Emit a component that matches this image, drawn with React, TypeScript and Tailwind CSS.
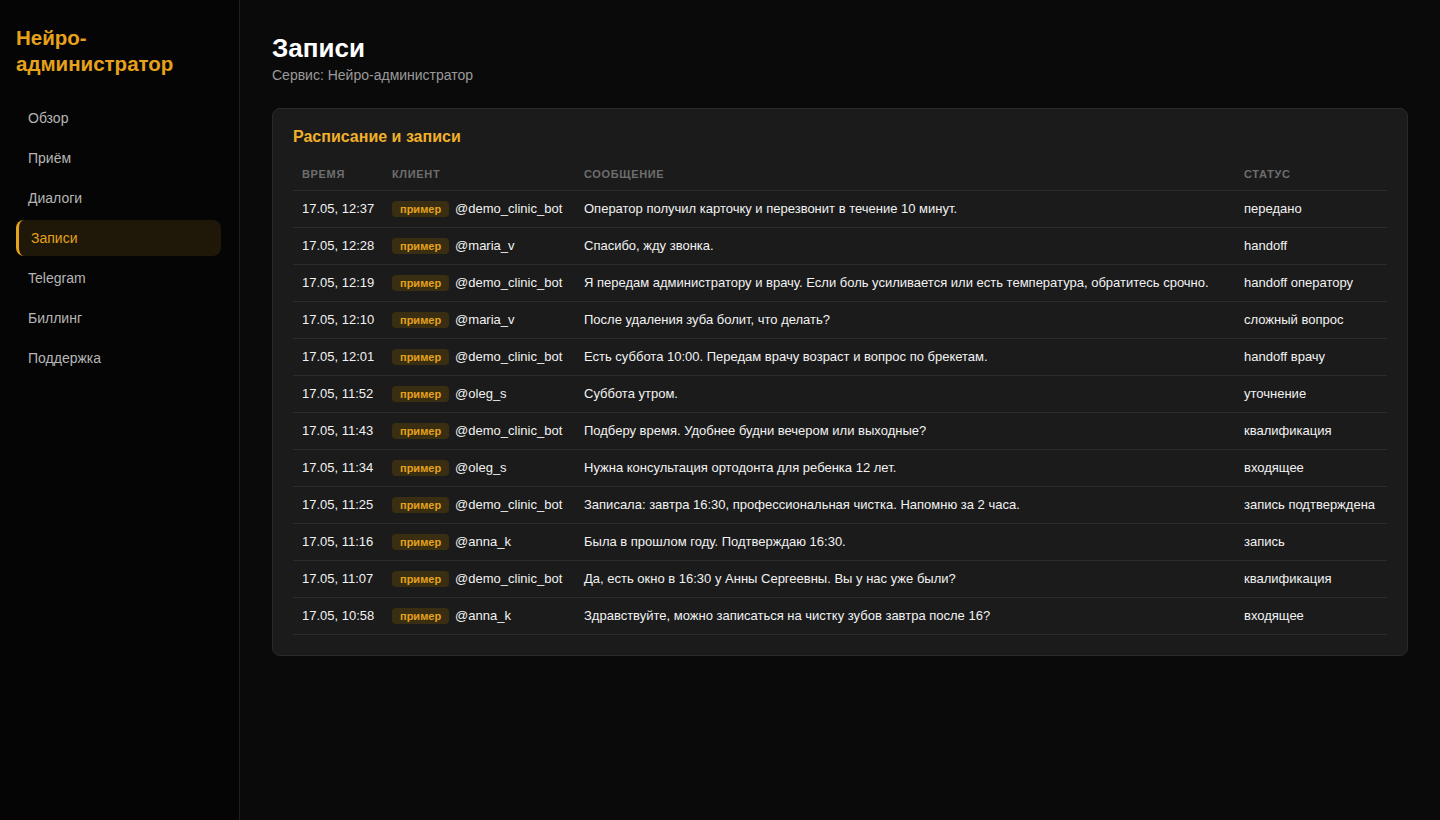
const nav = ['Обзор', 'Приём', 'Диалоги', 'Записи', 'Telegram', 'Биллинг', 'Поддержка'];

type Row = { time: string; client: string; message: string; status: string };

const rows: Row[] = [
  { time: '17.05, 12:37', client: '@demo_clinic_bot', message: 'Оператор получил карточку и перезвонит в течение 10 минут.', status: 'передано' },
  { time: '17.05, 12:28', client: '@maria_v', message: 'Спасибо, жду звонка.', status: 'handoff' },
  { time: '17.05, 12:19', client: '@demo_clinic_bot', message: 'Я передам администратору и врачу. Если боль усиливается или есть температура, обратитесь срочно.', status: 'handoff оператору' },
  { time: '17.05, 12:10', client: '@maria_v', message: 'После удаления зуба болит, что делать?', status: 'сложный вопрос' },
  { time: '17.05, 12:01', client: '@demo_clinic_bot', message: 'Есть суббота 10:00. Передам врачу возраст и вопрос по брекетам.', status: 'handoff врачу' },
  { time: '17.05, 11:52', client: '@oleg_s', message: 'Суббота утром.', status: 'уточнение' },
  { time: '17.05, 11:43', client: '@demo_clinic_bot', message: 'Подберу время. Удобнее будни вечером или выходные?', status: 'квалификация' },
  { time: '17.05, 11:34', client: '@oleg_s', message: 'Нужна консультация ортодонта для ребенка 12 лет.', status: 'входящее' },
  { time: '17.05, 11:25', client: '@demo_clinic_bot', message: 'Записала: завтра 16:30, профессиональная чистка. Напомню за 2 часа.', status: 'запись подтверждена' },
  { time: '17.05, 11:16', client: '@anna_k', message: 'Была в прошлом году. Подтверждаю 16:30.', status: 'запись' },
  { time: '17.05, 11:07', client: '@demo_clinic_bot', message: 'Да, есть окно в 16:30 у Анны Сергеевны. Вы у нас уже были?', status: 'квалификация' },
  { time: '17.05, 10:58', client: '@anna_k', message: 'Здравствуйте, можно записаться на чистку зубов завтра после 16?', status: 'входящее' },
];

const headers = [
  { label: 'Время', pad: 'px-[9px]' },
  { label: 'Клиент', pad: 'px-[9px]' },
  { label: 'Сообщение', pad: 'px-[10px]' },
  { label: 'Статус', pad: 'px-[10px]' },
];

export default function App() {
  return (
    <div className="flex min-h-[820px] bg-[#0a0a0a] font-['Liberation_Sans',Arial,sans-serif] text-white">
      <aside className="w-[240px] shrink-0 border-r border-[#1f1f1f] bg-[#050505] px-4 pt-[25px]">
        <div className="text-[20.5px] font-bold leading-[26px] text-[#e5a21a]">
          Нейро-
          <br />
          администратор
        </div>
        <nav className="mt-[23px] flex flex-col gap-1 pr-[2px]">
          {nav.map(item =>
            item === 'Записи' ? (
              <div
                key={item}
                className="flex h-9 items-center rounded-lg border-l-[3px] border-[#e5a21a] bg-[#1f1707] pl-3 text-sm text-[#e5a21a]"
              >
                {item}
              </div>
            ) : (
              <div key={item} className="flex h-9 items-center pl-3 text-sm text-[#b5b5b5]">
                {item}
              </div>
            )
          )}
        </nav>
      </aside>

      <main className="flex-1 px-8 pt-[32px]">
        <h1 className="text-[26px] font-bold leading-[32px] text-white">Записи</h1>
        <p className="mt-[2px] text-sm leading-[18px] text-[#9a9a9a]">Сервис: Нейро-администратор</p>

        <section className="mt-[24px] rounded-lg border border-[#2a2a2a] bg-[#1b1b1b] px-5 pt-[18px] pb-5">
          <h2 className="text-base font-bold leading-5 text-[#f0b02a]">Расписание и записи</h2>
          <table className="mt-[21px] w-full table-fixed border-collapse text-[13px]">
            <colgroup>
              <col className="w-[90px]" />
              <col className="w-[191px]" />
              <col />
              <col className="w-[153px]" />
            </colgroup>
            <thead>
              <tr className="border-b border-[#2c2c2c]">
                {headers.map(h => (
                  <th
                    key={h.label}
                    className={`${h.pad} pb-[9px] text-left text-[11px] font-bold uppercase leading-[13px] tracking-[0.06em] text-[#6e6e6e]`}
                  >
                    {h.label}
                  </th>
                ))}
              </tr>
            </thead>
            <tbody>
              {rows.map((r, i) => (
                <tr key={i} className="h-[37px] border-b border-[#2c2c2c]">
                  <td className="whitespace-nowrap px-[9px] text-[#f2f2f2]">{r.time}</td>
                  <td className="whitespace-nowrap px-[9px]">
                    <div className="flex items-center gap-[6px]">
                      <span className="rounded bg-[#3a2e12] px-2 text-[11px] font-bold leading-4 text-[#e5a21a]">
                        пример
                      </span>
                      <span className="text-[#f2f2f2]">{r.client}</span>
                    </div>
                  </td>
                  <td className="whitespace-nowrap px-[10px] text-[#f2f2f2]">{r.message}</td>
                  <td className="whitespace-nowrap px-[10px] text-[#f2f2f2]">{r.status}</td>
                </tr>
              ))}
            </tbody>
          </table>
        </section>
      </main>
    </div>
  );
}
